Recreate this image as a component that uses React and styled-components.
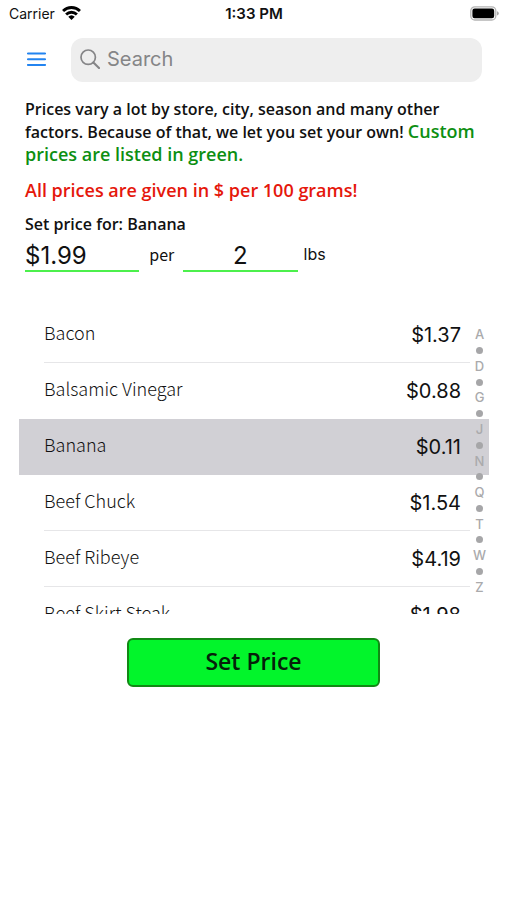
import { useState } from "react";
import styled, { createGlobalStyle } from "styled-components";

const items = [
  { name: "Bacon", price: "$1.37" },
  { name: "Balsamic Vinegar", price: "$0.88" },
  { name: "Banana", price: "$0.11" },
  { name: "Beef Chuck", price: "$1.54" },
  { name: "Beef Ribeye", price: "$4.19" },
  { name: "Beef Skirt Steak", price: "$1.98" },
];

const letters = ["A", "D", "G", "J", "N", "Q", "T", "W", "Z"];

export default function App() {
  const [selected, setSelected] = useState("Banana");
  const [price, setPrice] = useState("$1.99");
  const [amount, setAmount] = useState("2");

  return (
    <Page>
      <GlobalStyle />
      <StatusBar>
        <Carrier>
          Carrier
          <WifiIcon />
        </Carrier>
        <Clock>1:33 PM</Clock>
        <BatteryIcon />
      </StatusBar>

      <Header>
        <MenuButton aria-label="Menu">
          <MenuIcon />
        </MenuButton>
        <SearchBox>
          <SearchIcon />
          <input type="search" placeholder="Search" aria-label="Search" />
        </SearchBox>
      </Header>

      <Intro>
        <p>
          Prices vary a lot by store, city, season and many other factors.
          Because of that, we let you set your own!{" "}
          <Green>Custom prices are listed in green.</Green>
        </p>
        <Warning>All prices are given in $ per 100 grams!</Warning>
      </Intro>

      <PriceForm>
        <label htmlFor="price">Set price for: {selected}</label>
        <Fields>
          <Field
            id="price"
            value={price}
            onChange={(e) => setPrice(e.target.value)}
          />
          <Per htmlFor="amount">per</Per>
          <Field
            id="amount"
            $align="center"
            value={amount}
            onChange={(e) => setAmount(e.target.value)}
          />
          <Unit>lbs</Unit>
        </Fields>
      </PriceForm>

      <ListArea>
        <List>
          {items.map((item) => (
            <li key={item.name}>
              <Row
                $selected={item.name === selected}
                onClick={() => setSelected(item.name)}
              >
                <RowContent $line={!isNextToSelected(item.name, selected)}>
                  <Name>{item.name}</Name>
                  <Price>{item.price}</Price>
                </RowContent>
              </Row>
            </li>
          ))}
        </List>
        <Index aria-label="Alphabet">
          {letters.map((letter, i) => [
            i > 0 && <Dot key={letter + "dot"} />,
            <Letter key={letter}>{letter}</Letter>,
          ])}
        </Index>
      </ListArea>

      <SetButton>Set Price</SetButton>
    </Page>
  );
}

// the line is hidden on both edges of the highlighted row
function isNextToSelected(name, selected) {
  const current = items.findIndex((item) => item.name === name);
  const active = items.findIndex((item) => item.name === selected);
  return current === active || current === active - 1;
}

function WifiIcon() {
  return (
    <svg width="19" height="15" viewBox="0 0 18 14" aria-hidden="true">
      <g fill="none" stroke="#000" strokeWidth="2.7">
        <path d="M1 4.6 A11.4 11.4 0 0 1 17 4.6" />
        <path d="M3.9 7.9 A7.3 7.3 0 0 1 14.1 7.9" />
      </g>
      <path d="M9 13.2 L5.9 10.1 A4.5 4.5 0 0 1 12.1 10.1 Z" fill="#000" />
    </svg>
  );
}

function BatteryIcon() {
  return (
    <svg width="31" height="15" viewBox="0 0 31 15" aria-hidden="true">
      <rect x="2.8" y="0.8" width="25" height="13.2" rx="4" fill="#fff" stroke="#b4b4b4" strokeWidth="1.3" />
      <rect x="4.4" y="2.6" width="21.8" height="9.6" rx="2.2" fill="#000" />
      <path d="M29 5.2 Q30.8 5.8 30.8 7.4 T29 9.6 Z" fill="#a8a8a8" />
    </svg>
  );
}

function MenuIcon() {
  return (
    <svg width="19" height="16" viewBox="0 0 19 16" aria-hidden="true">
      <path d="M0.9 1.5 H18.1 M0.9 7.2 H18.1 M0.9 12.9 H18.1" stroke="#2384f0" strokeWidth="2" strokeLinecap="round" />
    </svg>
  );
}

function SearchIcon() {
  return (
    <svg width="20" height="20" viewBox="0 0 20 20" aria-hidden="true">
      <g fill="none" stroke="#858587" strokeWidth="1.7" strokeLinecap="round">
        <circle cx="8.2" cy="8.2" r="7.2" />
        <path d="M13.4 13.4 L19 19" strokeWidth="2.1" />
      </g>
    </svg>
  );
}

const GlobalStyle = createGlobalStyle`
  * {
    box-sizing: border-box;
  }

  body {
    margin: 0;
    background-color: #ffffff;
  }

  p, ul {
    margin: 0;
    padding: 0;
    list-style: none;
  }

  button {
    margin: 0;
    padding: 0;
    border: none;
    background: none;
    cursor: pointer;
  }
`;

const Page = styled.main`
  display: flex;
  flex-direction: column;
  color: #111111;
  font-family: "Open Sans", "Noto Sans", sans-serif;
`;

const StatusBar = styled.div`
  display: grid;
  grid-template-columns: 1fr auto 1fr;
  align-items: center;
  height: 27px;
  padding: 0 8px 0 9px;
  font-family: Inter, sans-serif;
  font-size: 14px;

  > svg {
    justify-self: end;
  }
`;

const Carrier = styled.span`
  display: flex;
  align-items: center;
  gap: 7px;
`;

const Clock = styled.span`
  font-size: 15px;
  font-weight: 600;
`;

const Header = styled.header`
  display: flex;
  align-items: center;
  gap: 25px;
  padding: 11px 25px 0 27px;
`;

const MenuButton = styled.button`
  display: flex;
`;

const SearchBox = styled.label`
  flex: 1;
  display: flex;
  align-items: center;
  gap: 7px;
  height: 44px;
  padding: 0 9px 2px;
  border-radius: 12px;
  background-color: #eeeeee;

  input {
    flex: 1;
    min-width: 0;
    padding: 0;
    border: none;
    outline: none;
    background: none;
    font-family: Inter, sans-serif;
    font-size: 20px;
  }

  input::placeholder {
    color: #858587;
  }
`;

const Intro = styled.section`
  padding: 16px 25px 0;
  font-size: 16px;
  line-height: 22px;
  font-weight: 600;
`;

const Green = styled.span`
  color: #0d8f12;
  font-size: 18px;
`;

const Warning = styled.p`
  margin-top: 13px;
  color: #e5170b;
  font-size: 18px;
`;

const PriceForm = styled.form`
  padding: 12px 25px 0;

  > label {
    display: block;
    font-size: 16px;
    line-height: 22px;
    font-weight: 600;
  }
`;

const Fields = styled.div`
  display: flex;
  align-items: center;
`;

const Field = styled.input`
  width: 25%;
  height: 37px;
  padding: 6px 0 0;
  border: none;
  border-bottom: 2px solid #4cf04c;
  outline: none;
  background: none;
  color: #111111;
  font-family: Inter, sans-serif;
  font-size: 24px;
  text-align: ${(props) => props.$align || "left"};
`;

const Per = styled.label`
  padding: 0 9px 0 10px;
  font-family: "Noto Sans CJK JP", "Open Sans", sans-serif;
  font-size: 16px;
`;

const Unit = styled.span`
  padding-left: 6px;
  font-family: Inter, sans-serif;
  font-size: 16px;
`;

const ListArea = styled.section`
  position: relative;
  margin: 35px 18px 0 19px;
`;

const List = styled.ul`
  height: 307px;
  overflow: hidden;
`;

const Row = styled.button`
  display: block;
  width: 100%;
  padding: 0 19px 0 25px;
  background-color: ${(props) => (props.$selected ? "#d1d0d5" : "transparent")};
`;

const RowContent = styled.span`
  display: flex;
  align-items: center;
  justify-content: space-between;
  height: 56px;
  padding-right: 9px;
  border-bottom: 1px solid ${(props) => (props.$line ? "#e6e6e8" : "transparent")};
  color: #111111;
`;

const Name = styled.span`
  padding-bottom: 5px;
  font-family: "Noto Sans CJK JP", "Open Sans", sans-serif;
  font-size: 18px;
  font-weight: 300;
`;

const Price = styled.span`
  font-family: Inter, sans-serif;
  font-size: 20px;
`;

const Index = styled.nav`
  position: absolute;
  top: 20px;
  right: 0;
  bottom: 19px;
  width: 19px;
  display: flex;
  flex-direction: column;
  color: #aaaaac;
`;

const Letter = styled.span`
  flex: 1;
  display: flex;
  align-items: center;
  justify-content: center;
  min-height: 0;
  font-family: Inter, sans-serif;
  font-size: 13px;
  line-height: 15px;
  font-weight: 500;
`;

const Dot = styled(Letter)`
  &::before {
    content: "";
    width: 7px;
    height: 7px;
    border-radius: 50%;
    background-color: #a6a6a8;
  }
`;

const SetButton = styled.button`
  align-self: center;
  width: 50%;
  height: 49px;
  margin-top: 24px;
  && {
    padding-bottom: 4px;
    border: 2px solid #118a14;
    background-color: #02f52b;
  }
  border-radius: 6px;
  color: #06200a;
  font-family: "Open Sans", "Noto Sans", sans-serif;
  font-size: 23px;
  font-weight: 600;
`;
